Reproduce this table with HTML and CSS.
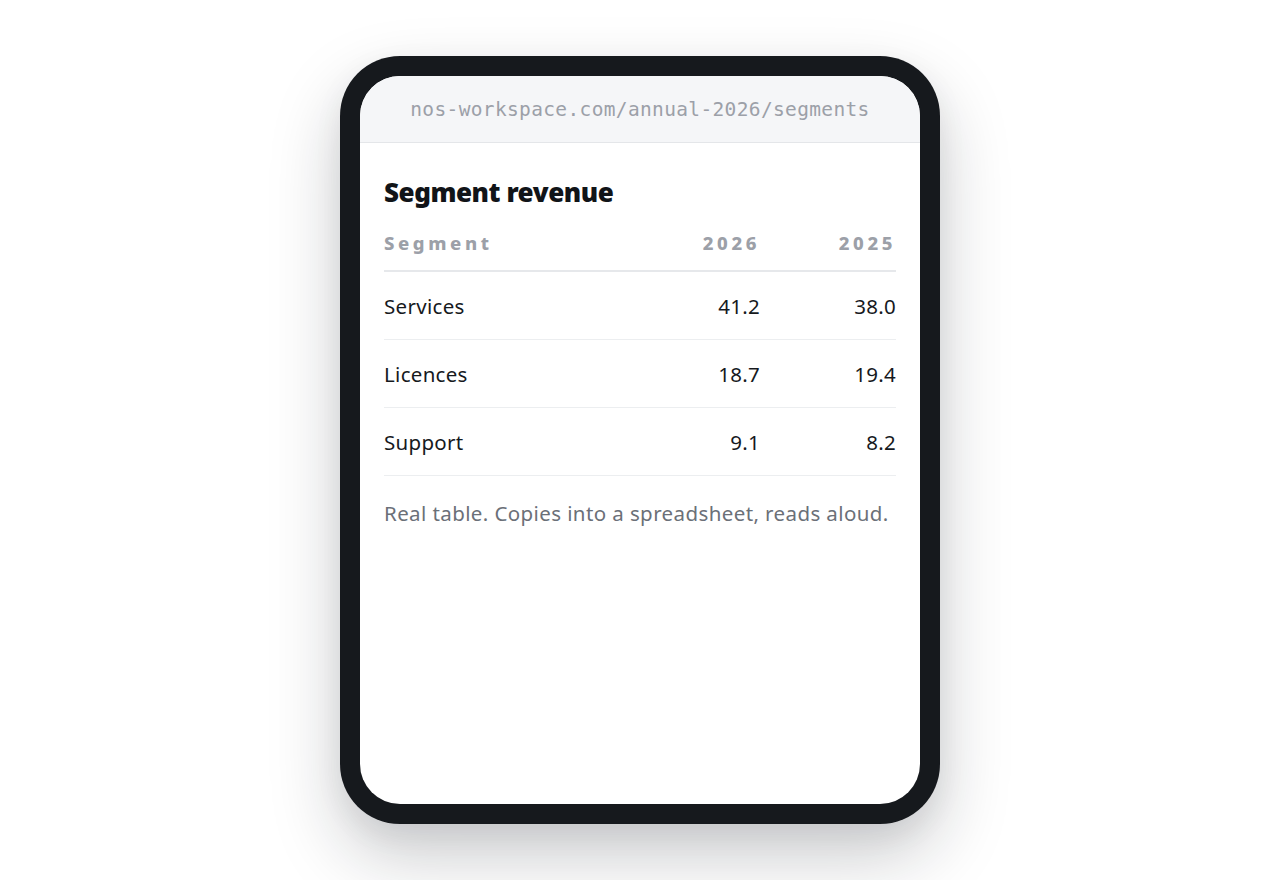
FILE: index.html
```html
<!DOCTYPE html>
<html lang="en">
<head>
<meta charset="utf-8">
<title>Segment revenue</title>
<link rel="stylesheet" href="styles.css">
</head>
<body>
<div class="stage">
  <div class="device">
    <div class="screen">
      <div class="urlbar">nos-workspace.com/annual-2026/segments</div>
      <main class="content">
        <h1 class="title">Segment revenue</h1>
        <table class="data">
          <thead>
            <tr><th class="name">Segment</th><th class="num">2026</th><th class="num last">2025</th></tr>
          </thead>
          <tbody>
            <tr><td class="name">Services</td><td class="num">41.2</td><td class="num last">38.0</td></tr>
            <tr><td class="name">Licences</td><td class="num">18.7</td><td class="num last">19.4</td></tr>
            <tr><td class="name">Support</td><td class="num">9.1</td><td class="num last">8.2</td></tr>
          </tbody>
        </table>
        <p class="note">Real table. Copies into a spreadsheet, reads aloud.</p>
      </main>
    </div>
  </div>
</div>
</body>
</html>
```

FILE: styles.css
```css
html, body {
  margin: 0;
  padding: 0;
  background: #ffffff;
}
body {
  font-family: "Noto Sans", "Open Sans", sans-serif;
  color: #16191d;
}
.stage {
  height: 880px;
  display: flex;
  align-items: center;
  justify-content: center;
}
.device {
  width: 600px;
  height: 768px;
  box-sizing: border-box;
  padding: 20px;
  background: #16191d;
  border-radius: 60px;
  box-shadow: 0 32px 70px rgba(20, 24, 30, 0.22), 0 10px 30px rgba(20, 24, 30, 0.06);
}
.screen {
  height: 100%;
  background: #ffffff;
  border-radius: 40px;
  overflow: hidden;
  display: flex;
  flex-direction: column;
}
.urlbar {
  height: 66px;
  flex: none;
  background: #f5f6f8;
  border-bottom: 1px solid #e4e6e9;
  display: flex;
  align-items: center;
  justify-content: center;
  font-family: "DejaVu Sans Mono", "Liberation Mono", monospace;
  font-size: 19.5px;
  letter-spacing: 0.35px;
  color: #9ca0a8;
}
.content {
  padding: 33px 24px 24px;
}
.title {
  margin: 0;
  font-family: "Noto Sans", sans-serif;
  font-size: 26px;
  font-weight: 900;
  letter-spacing: -0.45px;
  color: #111418;
  line-height: 32px;
}
.data {
  width: 100%;
  border-collapse: collapse;
  margin-top: 23px;
}
.data th {
  font-size: 18.5px;
  font-weight: 800;
  letter-spacing: 3.6px;
  color: #9ca0a8;
  line-height: 24px;
  padding: 0 0 15px;
  vertical-align: middle;
  border-bottom: 2px solid #e6e8eb;
}
.data td {
  font-size: 20.5px;
  letter-spacing: 0.3px;
  height: 67px;
  padding: 0;
  vertical-align: middle;
  border-bottom: 1px solid #eceef0;
}
.name { text-align: left; }
.num { text-align: right; }
.last { width: 136px; }
.note {
  margin: 23px 0 0;
  font-size: 20.5px;
  letter-spacing: 0.4px;
  line-height: 28px;
  color: #6b7078;
}
```
